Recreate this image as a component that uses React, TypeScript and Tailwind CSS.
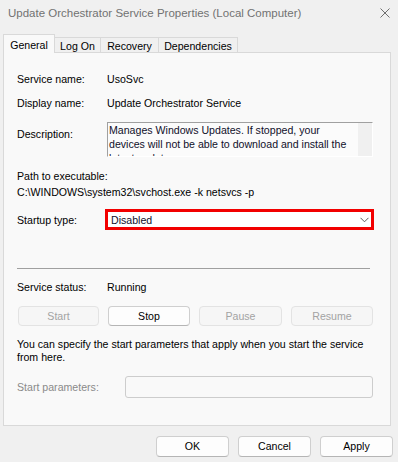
import React from 'react';

// Fenetre "Proprietes" d'un service Windows, onglet General.
const font = "font-['Liberation_Sans',Arial,sans-serif]";

function DlgButton({
  label,
  disabled,
  className = '',
}: {
  label: string;
  disabled?: boolean;
  className?: string;
}) {
  return (
    <div
      className={
        'flex items-center justify-center rounded-[4px] border ' +
        (disabled
          ? 'border-[#e3e3e3] bg-[#f6f6f6] text-[#a3a3a3] '
          : 'border-[#cfcfcf] border-b-[#b5b5b5] bg-[#fdfdfd] text-black ') +
        className
      }
    >
      {label}
    </div>
  );
}

export default function App() {
  const tabs = [
    { label: 'General', w: 'w-[52px]', active: true },
    { label: 'Log On', w: 'w-[45px]' },
    { label: 'Recovery', w: 'w-[58px]' },
    { label: 'Dependencies', w: 'w-[80px]' },
  ];

  return (
    <div className={`${font} flex h-[462px] w-[398px] flex-col overflow-hidden bg-[#f0f0f0] text-[10.6px] text-black`}>
      {/* barre de titre */}
      <div className="flex h-[27px] items-center justify-between pl-[8px] pr-[8px]">
        <span className="text-[11.5px] text-[#727272]">
          Update Orchestrator Service Properties (Local Computer)
        </span>
        <svg width="10" height="10" viewBox="0 0 10 10" className="mb-[1px]">
          <path d="M0.5 0.5 L9.5 9.5 M9.5 0.5 L0.5 9.5" stroke="#6f6f6f" strokeWidth="1" fill="none" />
        </svg>
      </div>

      {/* onglets */}
      <div className="mt-[7px] flex h-[18px] items-end pl-[3px]">
        {tabs.map((t, i) =>
          t.active ? (
            <div
              key={t.label}
              className={`relative z-10 -mb-px flex h-[19px] ${t.w} items-center justify-center border border-b-0 border-[#d9d9d9] bg-[#f9f9f9] pt-[3px]`}
            >
              {t.label}
            </div>
          ) : (
            <div
              key={t.label}
              className={`flex h-[15px] ${t.w} items-center justify-center border-t border-[#d9d9d9] bg-[#f0f0f0] pt-[3px] ${
                i === tabs.length - 1 ? 'border-r' : ''
              } ${i > 1 ? 'border-l' : ''}`}
            >
              {t.label}
            </div>
          )
        )}
      </div>

      {/* panneau */}
      <div className="ml-[3px] flex h-[374px] w-[388px] flex-col border border-[#d9d9d9] bg-[#f9f9f9] pl-[13px] leading-[14px]">
        <div className="mt-[19px] flex">
          <div className="w-[90px]">Service name:</div>
          <div>UsoSvc</div>
        </div>
        <div className="mt-[10px] flex">
          <div className="w-[90px]">Display name:</div>
          <div>Update Orchestrator Service</div>
        </div>
        <div className="mt-[12px] flex">
          <div className="w-[90px] pt-[5px]">Description:</div>
          <div className="flex h-[35px] w-[266px] border border-t-[#a0a0a0] border-l-[#a0a0a0] border-r-white border-b-white bg-[#fbfbfb]">
            <div className="h-full flex-1 overflow-hidden pl-[1px] text-[#10102a]">
              Manages Windows Updates. If stopped, your devices will not be able to download and install the
              latest updates.
            </div>
            <div className="h-full w-[14px] bg-[#f0f0f0]" />
          </div>
        </div>
        <div className="mt-[11px] leading-[16px]">
          <div>Path to executable:</div>
          <div className="whitespace-nowrap">C:\WINDOWS\system32\svchost.exe -k netsvcs -p</div>
        </div>
        <div className="mt-[9px] flex items-center">
          <div className="w-[88px]">Startup type:</div>
          <div className="flex h-[21px] w-[269px] items-center justify-between border-[3px] border-[#f20000] bg-white pl-[3px] pr-[2px] text-[#10102a]">
            <span>Disabled</span>
            <svg width="9" height="6" viewBox="0 0 9 6">
              <path d="M0.5 0.8 L4.5 4.8 L8.5 0.8" stroke="#5a5a5a" strokeWidth="1" fill="none" />
            </svg>
          </div>
        </div>

        <div className="mt-[38px] h-px w-[353px] bg-[#a0a0a0]" />

        <div className="mt-[11px] flex">
          <div className="w-[90px]">Service status:</div>
          <div>Running</div>
        </div>
        <div className="mt-[12px] flex gap-[9px] pl-[1px]">
          <DlgButton label="Start" disabled className="h-[20px] w-[81px]" />
          <DlgButton label="Stop" className="h-[20px] w-[82px]" />
          <DlgButton label="Pause" disabled className="h-[20px] w-[83px]" />
          <DlgButton label="Resume" disabled className="h-[20px] w-[82px]" />
        </div>
        <p className="mt-[12px] whitespace-nowrap leading-[13px]">
          You can specify the start parameters that apply when you start the service
          <br />
          from here.
        </p>
        <div className="mt-[12px] flex items-center">
          <div className="w-[108px] text-[#8a8a8a]">Start parameters:</div>
          <div className="h-[22px] w-[248px] rounded-[3px] border border-[#cdcdcd] bg-[#f9f9f9]" />
        </div>
      </div>

      {/* boutons du bas */}
      <div className="mt-[10px] flex justify-end gap-[9px] pr-[5px]">
        <DlgButton label="OK" className="h-[21px] w-[73px]" />
        <DlgButton label="Cancel" className="h-[21px] w-[73px]" />
        <DlgButton label="Apply" className="h-[21px] w-[73px]" />
      </div>
    </div>
  );
}
